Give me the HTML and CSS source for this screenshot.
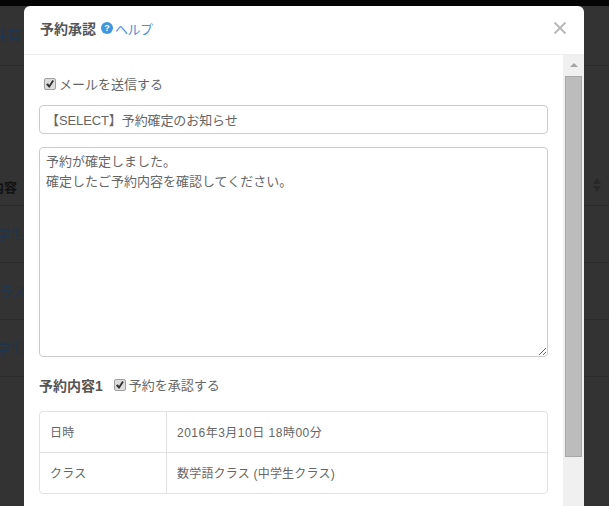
FILE: index.html
```html
<!DOCTYPE html>
<html lang="ja">
<head>
<meta charset="utf-8">
<title>予約承認</title>
<link rel="stylesheet" href="styles.css">
</head>
<body>
<div class="page">
  <div class="page-top"></div>
  <div class="page-head"><span class="link head-link">共有</span></div>
  <div class="page-gap"></div>
  <div class="page-row th"><span class="th-text">内容</span><svg class="sort" width="10" height="16" viewBox="0 0 10 16"><path d="M5 1l4 6H1zM5 15l4-6H1z"/></svg></div>
  <div class="page-row"><span class="link row-a">中学生クラス</span></div>
  <div class="page-row"><span class="link row-b">クラス)</span></div>
  <div class="page-row"><span class="link row-a">中学生クラス</span></div>
</div>

<div class="modal">
  <header class="modal-header">
    <h4 class="modal-title">予約承認</h4>
    <svg class="help-icon" width="12" height="12" viewBox="0 0 12 12"><circle cx="6" cy="6" r="6" fill="#3f97e2"/><text x="6" y="9" text-anchor="middle" class="help-q">?</text></svg>
    <a class="help-link">ヘルプ</a>
    <svg class="close" width="14" height="14" viewBox="0 0 14 14"><path d="M1.5 1.5l11 11M12.5 1.5l-11 11"/></svg>
  </header>
  <div class="modal-scroll">
    <div class="modal-body">
      <label class="check send"><input type="checkbox" checked>メールを送信する</label>
      <input class="control subject" type="text" value="【SELECT】予約確定のお知らせ">
      <textarea class="control message">予約が確定しました。
確定したご予約内容を確認してください。</textarea>
      <div class="section">
        <h5 class="section-title">予約内容1</h5>
        <label class="check approve"><input type="checkbox" checked>予約を承認する</label>
      </div>
      <div class="detail">
        <div class="detail-row"><div class="detail-key">日時</div><div class="detail-val date">2016年3月10日 18時00分</div></div>
        <div class="detail-row"><div class="detail-key">クラス</div><div class="detail-val">数学語クラス (中学生クラス)</div></div>
      </div>
    </div>
    <div class="scrollbar">
      <div class="scroll-btn"><span class="scroll-arrow"></span></div>
      <div class="scroll-thumb"></div>
    </div>
  </div>
</div>
</body>
</html>
```
FILE: styles.css
```css
* { box-sizing: border-box; }
html, body { margin: 0; height: 100%; overflow: hidden; }
body {
  position: relative;
  width: 609px;
  height: 506px;
  background: #333;
  font-family: "Liberation Sans", "Noto Sans CJK JP", sans-serif;
  font-size: 13px;
  color: #666;
}
.page { display: flex; flex-direction: column; }
.page-top { height: 6px; background: #050505; }
.page-head { height: 60px; padding-top: 20px; border-bottom: 1px solid #2b2b2b; font-size: 14px; line-height: 18px; overflow: hidden; }
.page-gap { height: 100px; }
.page-row {
  position: relative;
  height: 57px;
  padding-top: 20px;
  border-bottom: 1px solid #2b2b2b;
  line-height: 18px;
  font-size: 13px;
  white-space: nowrap;
  overflow: hidden;
}
.page-row.th { height: 40px; padding-top: 13px; color: #111; }
.link { color: #1d3550; display: inline-block; }
.head-link { margin-left: -7px; }
.th-text { display: inline-block; margin-left: -9px; font-weight: 700; }
.row-a { margin-left: -16px; }
.row-b { margin-left: -13px; }
.sort { position: absolute; right: 7px; top: 11px; fill: #282828; }

.modal {
  position: absolute;
  left: 24px;
  top: 6px;
  width: 560px;
  height: 500px;
  background: #fff;
  border-radius: 6px 6px 0 0;
  display: flex;
  flex-direction: column;
}
.modal-header {
  height: 49px;
  flex: none;
  display: flex;
  align-items: center;
  padding: 0 16px 4px;
  border-bottom: 1px solid #eee;
}
.modal-title { margin: 0; font-size: 14px; font-weight: 700; color: #555; }
.help-icon { margin-left: 5px; flex: none; }
.help-q { font: 700 9px "Liberation Sans", sans-serif; fill: #fff; }
.help-link { margin-left: 2px; color: #4a90d9; font-size: 13px; letter-spacing: -.5px; }
.close { margin-left: auto; margin-right: 1px; fill: none; stroke: #bbb; stroke-width: 2.2; }
.modal-scroll { flex: 1; display: flex; min-height: 0; }
.modal-body { flex: 1; padding: 0 15px; min-width: 0; }
.check { display: flex; align-items: center; font-size: 13px; color: #666; }
.check input {
  appearance: none;
  position: relative;
  width: 12px;
  height: 12px;
  margin: 2px 3px 0 0;
  background: #ddd;
  border: 1px solid #a0a0a0;
  border-radius: 2px;
  flex: none;
}
.check input::after {
  content: "";
  position: absolute;
  left: 1px;
  top: 1px;
  width: 8px;
  height: 8px;
  background: #333;
  clip-path: polygon(0 55%, 25% 40%, 40% 62%, 80% 0, 100% 12%, 42% 100%);
}
.send { margin: 19px 0 0 5px; height: 18px; }
.approve { margin-bottom: 2px; }
.control {
  display: block;
  width: 509px;
  border: 1px solid #ccc;
  border-radius: 4px;
  background: #fff;
  font-family: "Liberation Sans", "Noto Sans CJK JP", sans-serif;
  font-size: 13px;
  color: #666;
  outline: none;
}
.subject { height: 29px; margin-top: 13px; padding: 0 6px; letter-spacing: -.1px; }
.message { height: 210px; margin-top: 13px; padding: 4px 6px; line-height: 20px; resize: vertical; }
.section { display: flex; align-items: center; margin-top: 18px; height: 20px; }
.section-title { margin: 0 11px 0 0; font-size: 14px; font-weight: 700; color: #555; }
.detail { width: 509px; margin-top: 16px; border: 1px solid #e2e2e2; border-radius: 4px; font-size: 12px; }
.detail-row { display: flex; height: 40px; align-items: center; letter-spacing: .2px; }
.detail-row + .detail-row { height: 41px; border-top: 1px solid #e2e2e2; }
.detail-key { width: 127px; height: 100%; padding: 0 0 2px 10px; display: flex; align-items: center; border-right: 1px solid #e2e2e2; }
.detail-val { padding: 0 0 2px 10px; }
.date { letter-spacing: .5px; }
.scrollbar { width: 21px; flex: none; background: #f0f0f0; }
.scroll-btn { height: 21px; display: flex; justify-content: center; padding-top: 8px; }
.scroll-arrow { width: 0; height: 0; border: 4px solid transparent; border-top: 0; border-bottom: 4px solid #a3a3a3; }
.scroll-thumb { width: 17px; height: 381px; margin-left: 2px; background: #bcbcbc; border: 1px solid #a8a8a8; }
```
